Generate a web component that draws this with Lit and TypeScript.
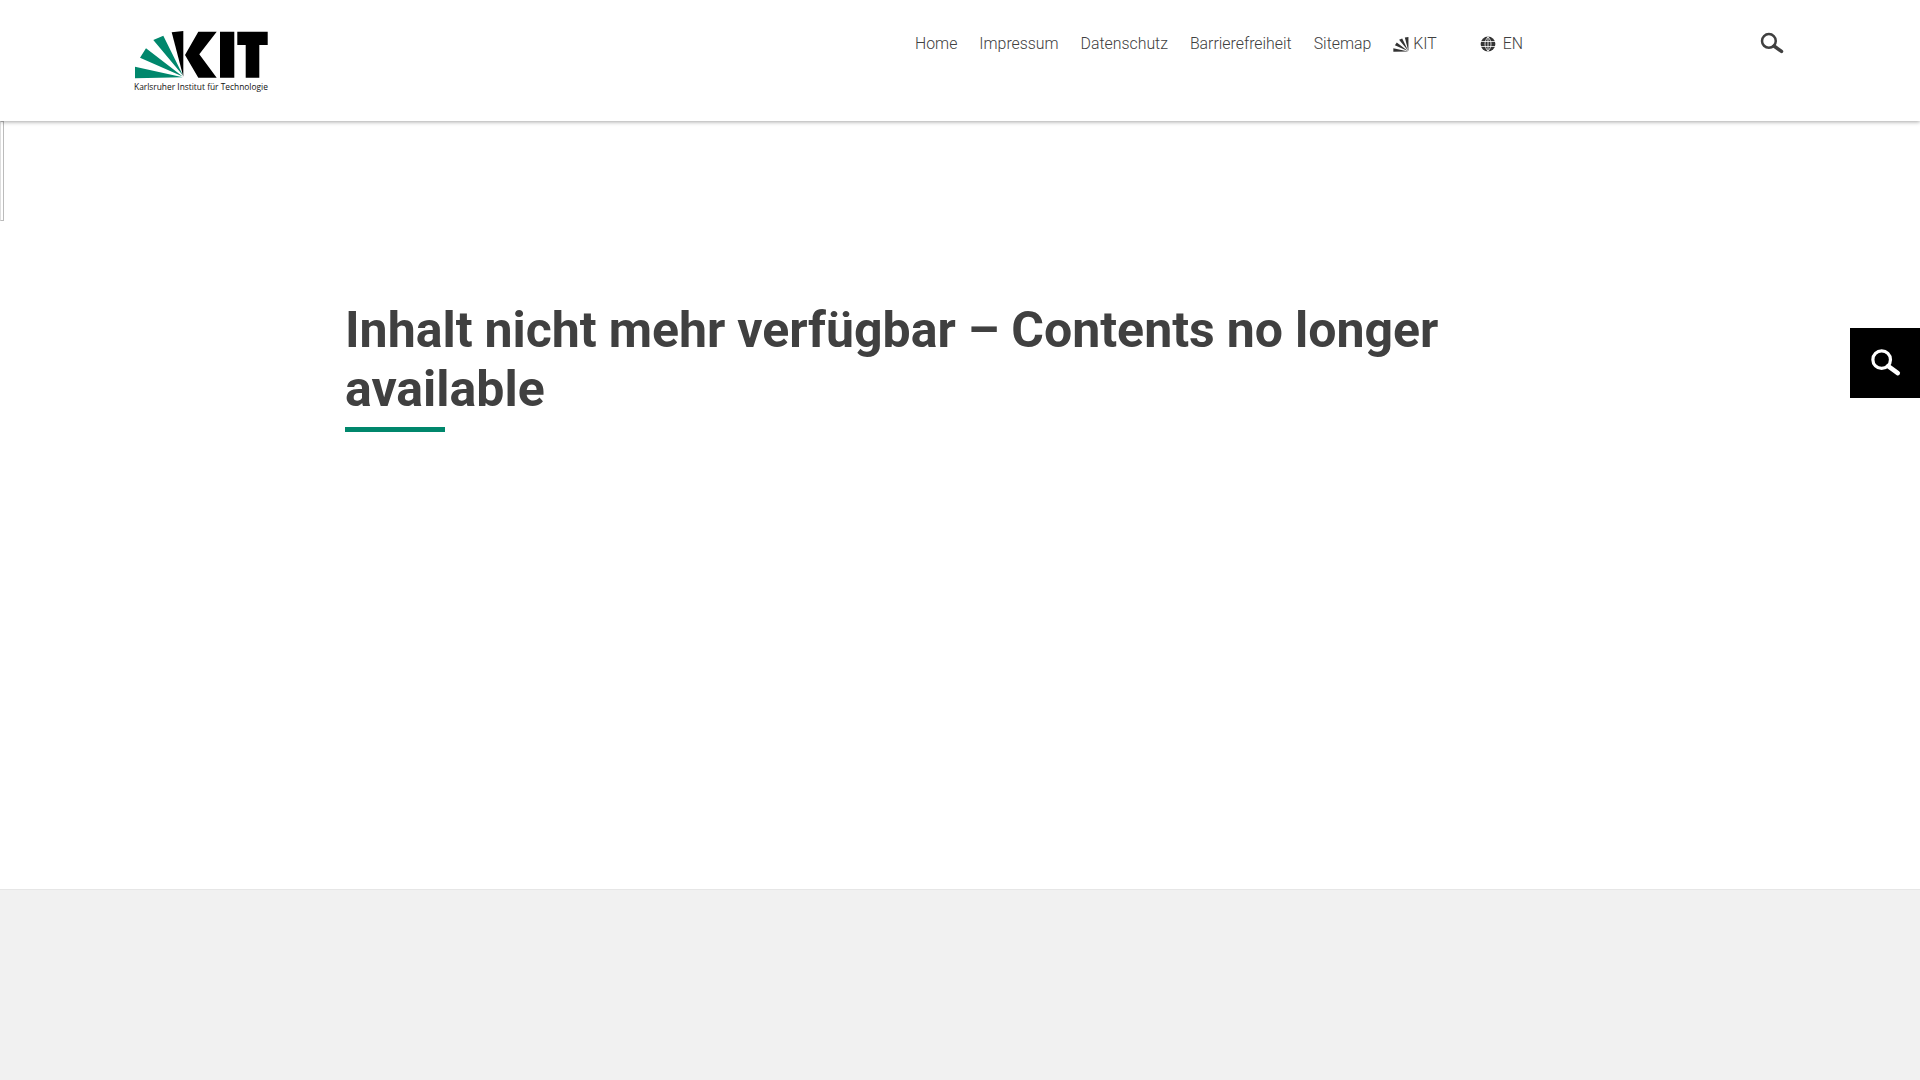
import { LitElement, html, css } from "lit";
import { customElement } from "lit/decorators.js";

const searchIcon = (cls: string) => html`<svg class=${cls} viewBox="0 0 24 24" aria-hidden="true"><circle cx="9.5" cy="9.5" r="6.6" fill="none" stroke="currentColor" stroke-width="2.4"/><path d="M14.4 14.4 L21.6 19.6" fill="none" stroke="currentColor" stroke-width="3.4" stroke-linecap="round"/></svg>`;

const fanPath = "M135 66.7 L182.7 77.2 L135 78.3 Z M140 57.7 L146 48.3 L182.7 76.4 Z M153.3 40 L163.3 35.7 L183 75.5 Z";
const slivPath = "M171.7 32.3 L183.3 31 V76.7 Z";

@customElement("app-root")
export class AppRoot extends LitElement {
  static styles = css`
    :host { display: block; height: 1080px; overflow: hidden; position: relative; font-family: Roboto, "Liberation Sans", sans-serif; background: #fff; color: #404040; }
    .page { display: flex; flex-direction: column; height: 1080px; }
    header { height: 121px; flex: none; box-shadow: 0 1px 4px rgba(0,0,0,.35); display: flex; align-items: flex-start; position: relative; z-index: 2; background: #fff; box-sizing: border-box; padding: 30px 0 0 134px; }
    .logo { width: 136px; height: 64px; flex: none; display: flex; flex-direction: column; }
    .logo svg { width: 136px; height: 51px; display: block; }
    .logo span { font: 400 8.4px/11px "Open Sans", sans-serif; color: #111; white-space: nowrap; }
    nav { display: flex; gap: 22px; margin: 0 0 0 645px; padding-top: 4px; font-size: 15.85px; font-weight: 300; line-height: 20px; color: #404040; }
    nav a { display: flex; align-items: center; gap: 4px; white-space: nowrap; }
    nav a.lang { margin-left: 21px; gap: 7px; }
    .fan { width: 16px; height: 15px; }
    .globe { width: 16px; height: 16px; }
    .search { width: 25px; height: 25px; margin: 1px 0 0 236px; color: #404040; }
    .left-mark { width: 2px; height: 98px; border: 1px solid #bbb; border-left-color: #ddd; position: absolute; left: 0; top: 121px; }
    main { flex: 1; padding: 180px 345px 0; }
    h1 { margin: 0; font-size: 50px; font-weight: 700; line-height: 59px; word-spacing: -0.45px; color: #404040; }
    .rule { width: 100px; height: 5px; background: #00876c; margin-top: 8px; }
    footer { height: 191px; flex: none; background: #f1f1f1; border-top: 1px solid #e6e6e6; box-sizing: border-box; }
    .tab { position: absolute; right: 0; top: 328px; width: 70px; height: 70px; background: #000; color: #fff; display: flex; align-items: center; justify-content: center; }
    .tab svg { width: 32px; height: 32px; }
  `;

  render() {
    return html`
      <div class="page">
        <header>
          <div class="logo">
            <svg viewBox="134 30 136 51" aria-hidden="true">
              <path fill="#00876c" d=${fanPath} />
              <path fill="#000" d=${slivPath} />
              <path fill="#000" d="M198.3 31.7 H216.7 L199.3 54.3 L216.7 77.7 H198.3 L185 55 Z M220 31.7 H234.3 V77.7 H220 Z M237.3 31.7 H267.7 V45 H259.3 V77.7 H245.7 V45 H237.3 Z" />
            </svg>
            <span>Karlsruher Institut für Technologie</span>
          </div>
          <nav>
            <a>Home</a><a>Impressum</a><a>Datenschutz</a><a>Barrierefreiheit</a><a>Sitemap</a>
            <a><svg class="fan" viewBox="135 31 49 48" aria-hidden="true"><path fill="#333" d=${fanPath}/><path fill="#333" d=${slivPath}/></svg>KIT</a>
            <a class="lang"><svg class="globe" viewBox="0 0 16 16" aria-hidden="true"><circle cx="8" cy="8" r="7.4" fill="#333"/><path d="M0.8 5.5 H15.2 M0.8 10.5 H15.2 M8 .8 V15.2 M8 .8 C4 5 4 11 8 15.2 M8 .8 C12 5 12 11 8 15.2" fill="none" stroke="#fff" stroke-width=".8"/></svg>EN</a>
          </nav>
          ${searchIcon("search")}
        </header>
        <div class="left-mark"></div>
        <main>
          <h1>Inhalt nicht mehr verfügbar – Contents no longer available</h1>
          <div class="rule"></div>
        </main>
        <footer></footer>
      </div>
      <div class="tab">${searchIcon("")}</div>
    `;
  }
}
